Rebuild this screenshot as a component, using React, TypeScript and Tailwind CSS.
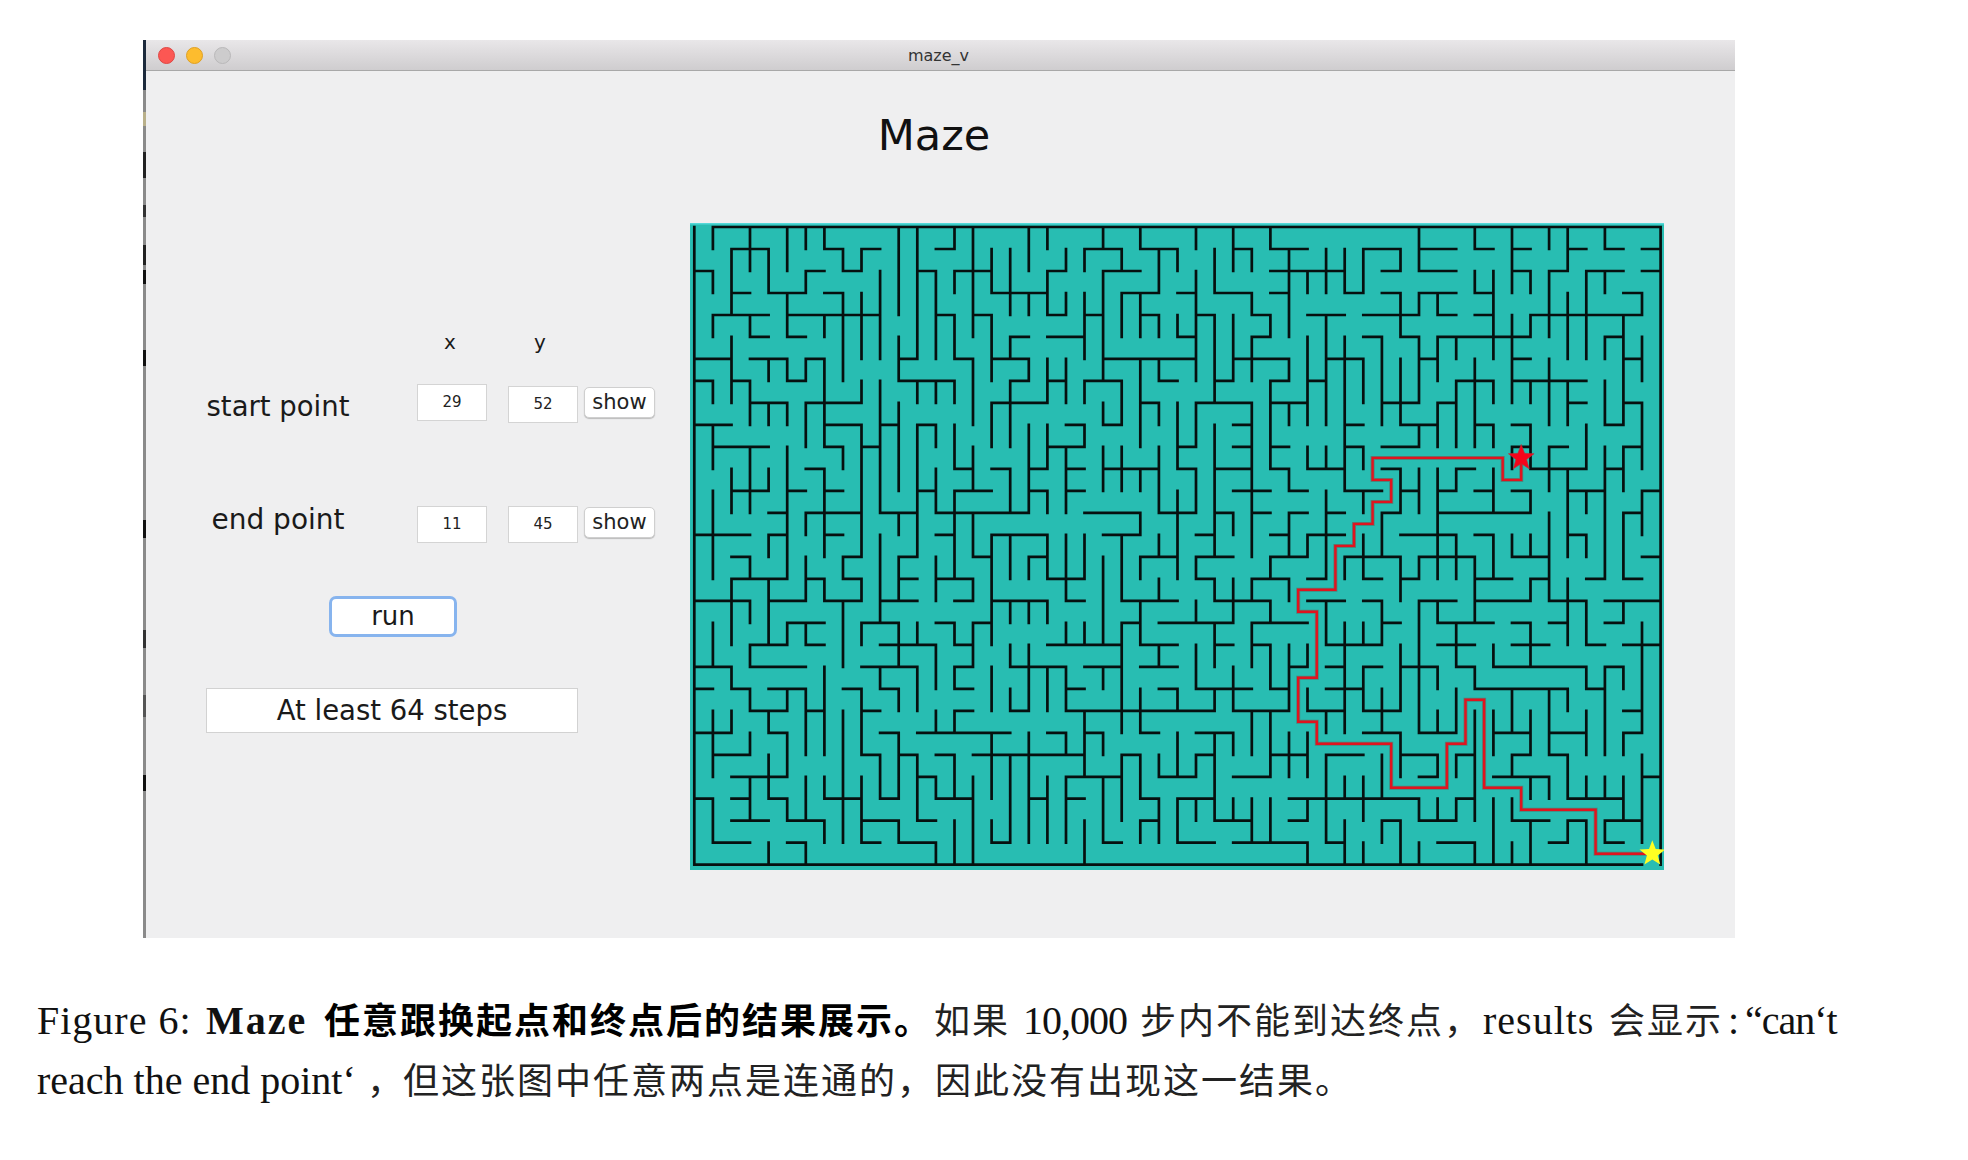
import React from 'react';

// maze walls, "row:from-to" for horizontals and "col:from-to" for verticals
const H_WALLS = `0:1-52 29:0-51
1:2-4 1:7-8 1:9-10 1:13-14 1:21-23 1:24-26 1:29-30 1:31-33 1:36-38 1:39-41 1:42-43 1:44-45 1:47-48 1:49-50 1:51-52
2:0-1 2:6-7 2:8-9 2:12-13 2:14-16 2:19-20 2:22-24 2:31-35 2:37-38 2:39-41 2:44-45 2:46-47 2:48-50 2:51-52
3:2-3 3:4-6 3:7-8 3:16-19 3:23-25 3:26-27 3:28-30 3:31-32 3:35-36 3:37-38 3:39-41 3:42-43 3:50-51
4:1-4 4:5-10 4:13-14 4:15-16 4:19-20 4:21-22 4:24-25 4:27-28 4:30-31 4:33-35 4:36-39 4:40-41 4:42-43 4:45-51
5:3-4 5:5-6 5:17-18 5:19-21 5:26-27 5:30-31 5:36-37 5:38-39 5:40-45 5:49-50
6:0-2 6:3-5 6:6-7 6:11-12 6:14-15 6:16-18 6:22-27 6:29-32 6:34-36 6:39-40 6:44-45 6:50-51
7:0-1 7:2-3 7:5-6 7:11-14 7:17-18 7:19-20 7:21-23 7:25-26 7:28-29 7:31-32 7:33-34 7:41-43 7:44-48
8:3-5 8:6-9 8:16-19 8:24-25 8:27-30 8:31-33 8:37-39 8:40-41 8:47-48 8:50-51
9:0-2 9:7-9 9:10-11 9:12-13 9:20-21 9:22-23 9:29-30 9:35-36 9:38-40 9:42-43 9:44-45 9:49-50
10:1-4 10:7-8 10:9-10 10:19-21 10:26-27 10:29-30 10:31-32 10:35-36 10:37-39 10:44-45 10:46-47 10:50-51
11:6-7 11:14-15 11:16-17 11:18-19 11:20-21 11:22-25 11:26-27 11:28-30 11:31-32 11:33-35 11:37-38 11:41-42 11:45-48 11:49-50
12:2-4 12:5-6 12:7-8 12:12-13 12:14-16 12:18-19 12:20-21 12:29-31 12:32-33 12:35-37 12:38-39 12:40-41 12:42-43 12:44-45 12:47-49 12:51-52
13:4-5 13:6-9 13:10-12 13:13-18 13:21-24 13:25-27 13:28-29 13:30-31 13:32-33 13:34-35 13:37-38 13:40-45 13:50-51
14:0-3 14:4-5 14:7-8 14:13-14 14:16-19 14:22-24 14:27-28 14:31-32 14:33-35 14:38-41 14:42-43 14:47-48
15:2-3 15:8-9 15:11-12 15:15-16 15:18-19 15:24-26 15:27-29 15:31-33 15:35-38 15:39-42 15:44-46 15:51-52
16:2-5 16:6-7 16:8-9 16:11-12 16:13-15 16:19-21 16:27-28 16:30-32 16:33-34 16:36-37 16:38-39 16:42-44 16:45-46 16:48-49 16:50-51
17:0-3 17:4-6 17:7-9 17:10-12 17:14-15 17:16-19 17:20-21 17:23-26 17:28-31 17:33-35 17:36-37 17:39-41 17:42-45 17:46-48 17:49-52
18:5-7 18:9-11 18:13-14 18:15-16 18:23-24 18:25-29 18:30-33 18:37-38 18:40-43 18:44-45 18:46-47 18:49-50
19:3-5 19:6-7 19:10-13 19:14-15 19:19-23 19:24-26 19:28-29 19:30-31 19:34-37 19:40-42 19:44-46 19:48-49 19:50-52
20:0-2 20:3-6 20:9-12 20:14-15 20:17-20 20:21-23 20:24-26 20:32-33 20:34-35 20:36-37 20:38-40 20:41-42 20:43-48 20:49-50
21:0-1 21:2-3 21:4-6 21:8-9 21:10-11 21:14-15 21:20-21 21:25-26 21:27-30 21:31-32 21:34-36 21:42-47 21:48-49
22:3-5 22:6-7 22:9-10 22:14-15 22:17-18 22:20-28 22:29-32 22:33-35 22:36-38 22:50-51
23:0-2 23:4-5 23:10-11 23:12-17 23:19-20 23:21-22 23:24-25 23:27-29 23:36-38 23:39-41 23:43-45 23:46-48 23:50-51
24:1-3 24:9-10 24:11-12 24:13-14 24:15-21 24:23-24 24:27-28 24:31-33 24:34-36 24:38-40 24:41-42 24:44-45 24:46-47
25:2-5 25:12-13 25:20-23 25:25-27 25:29-31 25:39-40 25:43-46 25:51-52
26:0-1 26:2-3 26:4-5 26:7-9 26:10-11 26:13-15 26:18-19 26:20-21 26:24-25 26:26-28 26:32-39 26:41-42 26:47-50
27:2-4 27:5-7 27:9-11 27:12-13 27:24-25 27:28-30 27:32-33 27:37-38 27:39-41 27:44-46 27:47-48 27:49-51
28:1-3 28:5-6 28:9-10 28:11-13 28:16-17 28:22-23 28:26-28 28:29-33 28:34-35 28:40-42 28:46-47 28:49-50`;

const V_WALLS = `0:0-29 52:0-29
1:0-1 1:2-3 1:4-5 1:7-8 1:9-11 1:12-16 1:18-20 1:22-25 1:26-28
2:1-4 2:5-8 2:11-13 2:16-19 2:20-21 2:22-23
3:0-2 3:4-5 3:7-9 3:10-13 3:15-16 3:17-18 3:19-20 3:21-22 3:23-24 3:25-27
4:1-3 4:6-7 4:8-9 4:11-12 4:14-15 4:16-19 4:22-23 4:24-26 4:28-29
5:0-2 5:3-5 5:6-7 5:8-9 5:10-16 5:18-19 5:21-22 5:23-25 5:26-27
6:0-1 6:2-3 6:6-7 6:8-10 6:13-14 6:15-17 6:18-19 6:21-24 6:25-27 6:28-29
7:0-1 7:4-5 7:6-10 7:11-15 7:16-17 7:20-24 7:25-26 7:27-28
8:1-2 8:3-7 8:10-11 8:15-16 8:17-20 8:22-28
9:1-2 9:3-6 9:7-8 9:9-15 9:16-17 9:18-19 9:21-24 9:25-28
10:2-6 10:7-13 10:14-18 10:20-21 10:24-26
11:0-4 11:5-7 11:8-12 11:13-14 11:15-17 11:18-20 11:21-22 11:23-26 11:27-28
12:0-6 12:7-8 12:9-15 12:18-19 12:20-22 12:24-27
13:2-6 13:7-8 13:9-10 13:11-13 13:15-17 13:19-21 13:22-23 13:25-26 13:28-29
14:0-1 14:2-3 14:4-6 14:7-8 14:9-11 14:12-16 14:18-19 14:20-21 14:22-23 14:24-26 14:27-29
15:0-5 15:6-9 15:10-12 15:13-15 15:16-17 15:18-20 15:25-29
16:1-3 16:4-7 16:8-10 16:14-19 16:20-22 16:23-26 16:27-28
17:1-4 17:5-6 17:7-10 17:11-13 17:14-16 17:17-18 17:19-20 17:21-22 17:24-28
18:0-2 18:3-4 18:6-7 18:9-13 18:15-16 18:17-18 18:19-22 18:23-28
19:0-1 19:2-4 19:6-8 19:9-11 19:12-13 19:14-16 19:17-18 19:20-22 19:25-28
20:1-2 20:3-4 20:6-8 20:10-13 20:14-17 20:18-19 20:20-22 20:23-24 20:25-28
21:1-2 21:3-6 21:7-8 21:9-10 21:14-16 21:18-19 21:22-25 21:27-29
22:0-1 22:2-7 22:8-9 22:10-12 22:15-19 22:20-21 22:23-24 22:25-28
23:1-2 23:3-5 23:7-9 23:10-12 23:14-17 23:18-23 23:24-27
24:0-1 24:3-5 24:6-10 24:11-12 24:13-14 24:15-16 24:17-19 24:21-23 24:24-26 24:27-28
25:1-3 25:4-5 25:6-7 25:8-9 25:10-13 25:14-15 25:16-17 25:19-20 25:24-25 25:26-28
26:1-2 26:4-5 26:8-11 26:12-16 26:21-22 26:23-25 26:26-28
27:0-1 27:2-7 27:8-10 27:11-13 27:15-16 27:17-18 27:19-21 27:24-25 27:26-27
28:1-3 28:4-8 28:9-15 28:16-17 28:18-20 28:21-22 28:23-27
29:0-2 29:4-7 29:13-14 29:16-18 29:20-22 29:23-24 29:26-27
30:1-2 30:3-4 30:5-7 30:8-15 30:16-17 30:18-20 30:22-24 30:26-28
31:0-1 31:4-5 31:7-11 31:15-16 31:17-18 31:19-21 31:22-25 31:26-28
32:1-5 32:6-7 32:8-9 32:11-12 32:13-15 32:16-17 32:19-22 32:23-25
33:2-3 33:5-9 33:10-11 33:14-15 33:19-20 33:21-22 33:23-25 33:26-27 33:28-29
34:1-3 34:4-9 34:10-11 34:12-16 34:17-19 34:22-23 34:24-28
35:1-3 35:5-12 35:15-16 35:18-23 35:25-26 35:27-29
36:1-3 36:6-8 36:10-11 36:12-13 36:14-16 36:18-19 36:20-22 36:25-27 36:28-29
37:5-9 37:13-15 37:17-19 37:21-23 37:24-26 37:27-28
38:1-2 38:3-5 38:6-9 38:11-13 38:15-17 38:19-22 38:23-25 38:27-29
39:0-2 39:3-4 39:5-8 39:9-10 39:11-13 39:15-16 39:17-23 39:26-27 39:28-29
40:3-4 40:5-7 40:8-10 40:11-16 40:17-18 40:20-21 40:22-23 40:24-25 40:26-27
41:5-6 41:7-10 41:11-12 41:14-16 41:18-20 41:21-23 41:24-25 41:26-27
42:0-1 42:2-3 42:6-10 42:15-18 42:20-21 42:22-27 42:28-29
43:2-6 43:7-8 43:9-10 43:11-13 43:14-16 43:19-20 43:22-24 43:26-29
44:0-3 44:4-8 44:10-11 44:14-15 44:21-23 44:24-25 44:26-27 44:28-29
45:2-3 45:4-5 45:7-8 45:9-11 45:12-13 45:14-15 45:16-17 45:18-20 45:22-24 45:25-26 45:27-29
46:0-1 46:2-5 46:6-9 46:10-12 46:13-17 46:21-24 46:25-26
47:0-2 47:3-6 47:7-9 47:11-15 47:16-19 47:21-22 47:24-26 47:27-28
48:2-6 48:9-11 48:12-13 48:14-15 48:17-19 48:20-21 48:22-24 48:25-26 48:27-29
49:0-1 49:2-3 49:5-6 49:7-9 49:10-16 49:20-24 49:25-26 49:27-28
50:4-9 50:10-12 50:13-16 50:17-18 50:20-21 50:23-24 50:25-27
51:3-4 51:5-7 51:8-11 51:12-14 51:18-23 51:24-28`;

const X0 = 4.3;
const Y0 = 4;
const CELL_W = 18.583;
const CELL_H = 21.99;

const px = (col: number) => X0 + CELL_W * col;
const py = (row: number) => Y0 + CELL_H * row;

const wallPath = () => {
  let d = '';
  H_WALLS.split(/\s+/).forEach((w) => {
    const [j, rest] = w.split(':');
    const [a, b] = rest.split('-').map(Number);
    d += `M${px(a).toFixed(1)} ${py(+j).toFixed(1)}H${px(b).toFixed(1)}`;
  });
  V_WALLS.split(/\s+/).forEach((w) => {
    const [i, rest] = w.split(':');
    const [a, b] = rest.split('-').map(Number);
    d += `M${px(+i).toFixed(1)} ${py(a).toFixed(1)}V${py(b).toFixed(1)}`;
  });
  return d;
};

// cells of the solved route, [col, row]
const ROUTE: [number, number][] = [
  [44, 10], [44, 11], [43, 11], [43, 10], [36, 10], [36, 11], [37, 11], [37, 12], [36, 12], [36, 13],
  [35, 13], [35, 14], [34, 14], [34, 16], [32, 16], [32, 17], [33, 17], [33, 20], [32, 20], [32, 22],
  [33, 22], [33, 23], [37, 23], [37, 25], [40, 25], [40, 23], [41, 23], [41, 21], [42, 21], [42, 25],
  [44, 25], [44, 26], [48, 26], [48, 28], [51, 28],
];

const routePoints = ROUTE.map(([c, r]) => `${px(c + 0.5).toFixed(1)},${py(r + 0.5).toFixed(1)}`).join(' ');

const starPoints = (cx: number, cy: number, r: number) => {
  const pts: string[] = [];
  for (let k = 0; k < 10; k++) {
    const rad = k % 2 === 0 ? r : r * 0.42;
    const a = -Math.PI / 2 + (k * Math.PI) / 5;
    pts.push(`${(cx + rad * Math.cos(a)).toFixed(1)},${(cy + rad * Math.sin(a)).toFixed(1)}`);
  }
  return pts.join(' ');
};

const Maze = () => (
  <svg width={974} height={647} viewBox="0 0 974 647" className="block shrink-0 bg-[#28bdb2]">
    <path d="M0 0.5H974" stroke="#55d8d8" strokeWidth={2} />
    <path d={wallPath()} stroke="#06100f" strokeWidth={2.7} fill="none" strokeLinecap="square" />
    <polyline points={routePoints} stroke="#6a5a50" strokeOpacity={0.55} strokeWidth={4} fill="none" />
    <polyline points={routePoints} stroke="#e0141f" strokeWidth={2.4} fill="none" />
    <polygon points={starPoints(px(44.5), py(10.5), 13.5)} fill="#f6041a" stroke="#b5303a" strokeWidth={0.6} />
    <polygon points={starPoints(px(51.5) + 1, py(28.5), 13.5)} fill="#ffff22" />
  </svg>
);

const Field = ({ value, className = '' }: { value: string; className?: string }) => (
  <div className={`w-[70px] h-[37px] bg-white border border-[#d4d4d4] flex items-center justify-center text-[15px] text-[#222] ${className}`}>
    {value}
  </div>
);

const ShowButton = ({ className = '' }: { className?: string }) => (
  <div className={`w-[71px] h-[31px] bg-white border border-[#cfcfcf] rounded-[5px] shadow-[0_1px_1px_#bbb] flex items-center justify-center text-[21px] leading-none text-[#222] ${className}`}>
    show
  </div>
);

// left edge of the window is a messy crop in the picture
const EDGE_MARKS = [
  [0, 50, '#1c2a3c'], [72, 14, '#b9b08a'], [112, 26, '#222'], [165, 12, '#333'], [205, 20, '#222'],
  [230, 14, '#111'], [310, 16, '#111'], [480, 18, '#111'], [590, 18, '#333'], [655, 22, '#555'], [735, 16, '#111'],
];

const serif = "font-['Liberation_Serif',serif] text-[40px] leading-none text-[#111] shrink-0 whitespace-nowrap";
const cjk = "font-['Noto_Sans_CJK_SC',sans-serif] text-[36px] leading-none tracking-[2px] text-[#222] shrink-0 whitespace-nowrap";
const cjkBold = "font-['Noto_Sans_CJK_SC',sans-serif] text-[36px] leading-none tracking-[2px] font-bold text-black shrink-0 whitespace-nowrap";

export default function App() {
  return (
    <div className="min-h-screen bg-white overflow-hidden">
      <div className="relative ml-[143px] mt-[40px] w-[1592px] h-[898px] bg-[#efeff0] border-l-[3px] border-[#8a8a8a] rounded-tl-[5px] font-['DejaVu_Sans',sans-serif]">
        <div className="relative h-[31px] bg-gradient-to-b from-[#e9e7e9] to-[#cfcdcf] border-b border-[#a8a8a8] flex items-center justify-center pt-[2px] pr-[4px]">
          <div className="absolute left-[12px] top-[7px] flex gap-[11px]">
            <div className="w-[17px] h-[17px] rounded-full bg-[#fc5753] border border-[#df4744]" />
            <div className="w-[17px] h-[17px] rounded-full bg-[#fdbc2e] border border-[#dfa023]" />
            <div className="w-[17px] h-[17px] rounded-full bg-[#cdcccd] border border-[#b9b8b9]" />
          </div>
          <span className="text-[16px] text-[#333]">maze_v</span>
        </div>

        <div className="h-[152px] pt-[38px] pr-[13px] text-center text-[43px] leading-[52px] text-[#111]">Maze</div>

        <div className="flex">
          <div className="w-[544px] pl-[60px] shrink-0 text-[#1a1a1a]">
            <div className="flex mt-[105px] h-[28px] text-[20px] leading-[28px]">
              <span className="ml-[237px] w-[14px] text-center">x</span>
              <span className="ml-[76px] w-[14px] text-center">y</span>
            </div>
            <div className="flex items-start mt-[28px] whitespace-nowrap">
              <span className="w-[144px] mr-[67px] mt-[4px] text-center text-[27.5px] leading-[36px]">start point</span>
              <Field value="29" />
              <Field value="52" className="ml-[21px] mt-[2px]" />
              <ShowButton className="ml-[6px] mt-[3px]" />
            </div>
            <div className="flex items-start mt-[82px] whitespace-nowrap">
              <span className="w-[144px] mr-[67px] mt-[-4px] text-center text-[28px] leading-[36px]">end point</span>
              <Field value="11" />
              <Field value="45" className="ml-[21px]" />
              <ShowButton className="ml-[6px] mt-[1px]" />
            </div>
            <div className="w-[128px] h-[41px] ml-[123px] mt-[53px] bg-white border-[3px] border-[#87b4ee] rounded-[7px] flex items-center justify-center text-[26px]">
              run
            </div>
            <div className="w-[372px] h-[45px] mt-[51px] bg-white border border-[#d2d2d2] flex items-center justify-center text-[27.5px]">
              At least 64 steps
            </div>
          </div>
          <Maze />
        </div>

        <svg width={3} height={898} className="absolute left-[-3px] top-0">
          {EDGE_MARKS.map(([y, h, c], idx) => (
            <rect key={idx} x={0} y={y as number} width={3} height={h as number} fill={c as string} />
          ))}
        </svg>
      </div>

      <div className="pl-[37px] mt-[62px] flex flex-col gap-[20px]">
        <div className="flex items-baseline h-[40px]">
          <span className={`${serif} tracking-[1px] w-[169px]`}>Figure 6:</span>
          <span className={`${serif} font-bold tracking-[2px] w-[118px]`}>Maze</span>
          <span className={`${cjkBold} w-[610px]`}>任意跟换起点和终点后的结果展示。</span>
          <span className={`${cjk} w-[89px]`}>如果</span>
          <span className={`${serif} tracking-[-1px] w-[117px]`}>10,000</span>
          <span className={`${cjk} w-[343px]`}>步内不能到达终点，</span>
          <span className={`${serif} tracking-[1px] w-[126px]`}>results</span>
          <span className={`${cjk} w-[119px]`}>会显示</span>
          <span className={`${serif} w-[17px]`}>:</span>
          <span className={`${serif} tracking-[-1px]`}>“can‘t</span>
        </div>
        <div className="flex items-baseline h-[40px]">
          <span className={`${serif} tracking-[0px] w-[330px]`}>reach the end point‘</span>
          <span className={`${cjk} w-[36px]`}>，</span>
          <span className={cjk}>但这张图中任意两点是连通的，因此没有出现这一结果。</span>
        </div>
      </div>
    </div>
  );
}
